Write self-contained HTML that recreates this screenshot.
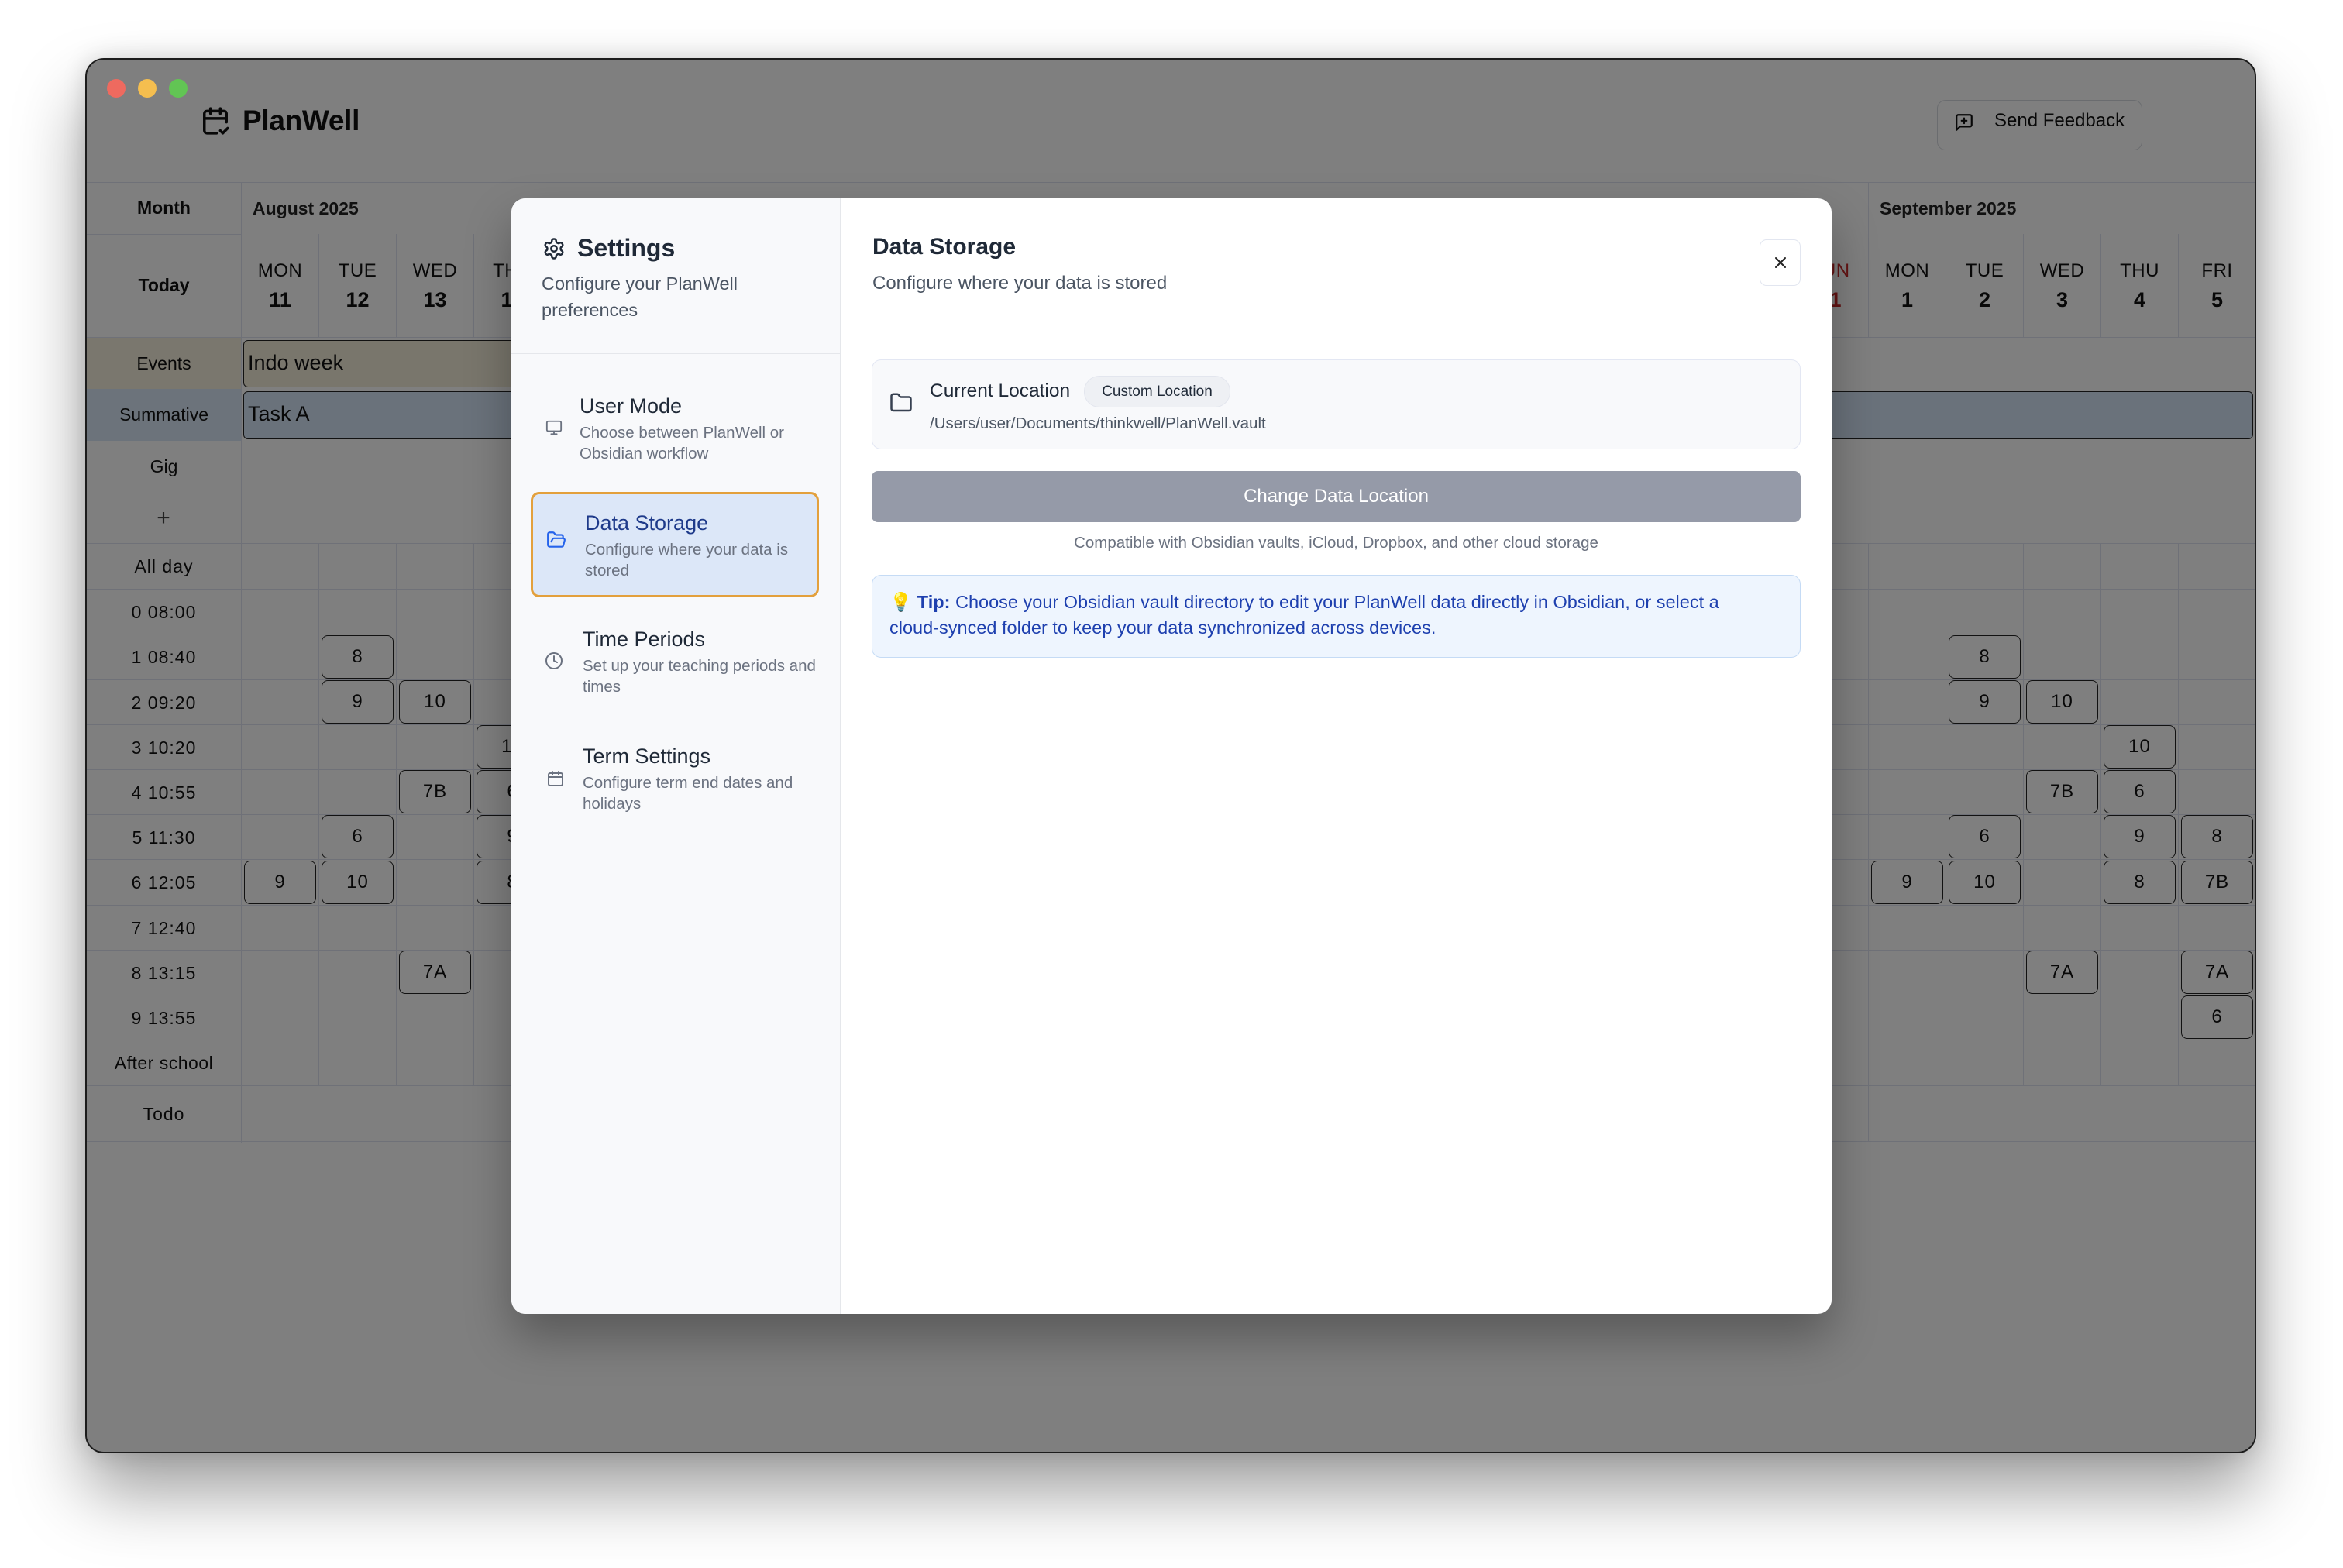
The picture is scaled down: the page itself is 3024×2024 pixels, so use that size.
<!DOCTYPE html>
<html><head><meta charset="utf-8">
<style>
*{margin:0;padding:0;box-sizing:border-box}
html,body{width:3024px;height:2024px;background:#fff;overflow:hidden;font-family:"Liberation Sans",Arial,sans-serif}
#win{position:absolute;left:110px;top:75px;width:2802px;height:1801px;border-radius:24px;overflow:hidden;border:2px solid #1c1c1c;box-shadow:0 50px 90px rgba(0,0,0,.38),0 0 30px rgba(0,0,0,.15);background:#fff}
#in{position:absolute;left:-112px;top:-77px;width:3024px;height:2024px}
.a{position:absolute}
.c{position:absolute;display:flex;align-items:center;justify-content:center}
.lbl{position:absolute;left:112px;width:199px;display:flex;align-items:center;justify-content:center;font-size:23px;letter-spacing:1px;color:#111}
.row{position:absolute;left:112px;width:2800px;border-bottom:1px solid #dfe2f0}
.box{position:absolute;width:93px;height:56px;border:1.6px solid #222;border-radius:8px;display:flex;align-items:center;justify-content:center;font-size:24px;letter-spacing:1px;color:#111}
.dh{position:absolute;top:302px;width:100px;height:133px;text-align:center;color:#111;border-left:1px solid #dfe2f0}
.dh .d{position:absolute;top:34px;width:100%;font-size:24px;letter-spacing:.5px}
.dh .n{position:absolute;top:70px;width:100%;font-size:27px;font-weight:bold}
#ov{position:absolute;left:0;top:0;width:3024px;height:2024px;background:rgba(0,0,0,.5)}
.tl{position:absolute;top:102px;width:24px;height:24px;border-radius:50%}
#modal{position:absolute;left:660px;top:256px;width:1704px;height:1440px;border-radius:18px;background:#fff;overflow:hidden;box-shadow:0 30px 60px rgba(0,0,0,.3)}
#side{position:absolute;left:0;top:0;width:425px;height:1440px;background:#f8f9fb;border-right:1px solid #e5e7eb}
.it{position:absolute;color:#1f2937}
.it .t{font-size:27px;font-weight:500;color:#1f2937}
.it .s{font-size:20.5px;line-height:27px;color:#6b7280;width:310px;margin-top:5px}
</style></head><body>
<div id="win"><div id="in">
  <svg class="a" style="left:259px;top:136px" width="38" height="40" viewBox="0 0 24 24" fill="none" stroke="#111" stroke-width="2.2" stroke-linecap="round" stroke-linejoin="round"><path d="M21 13V6a2 2 0 0 0-2-2H5a2 2 0 0 0-2 2v14a2 2 0 0 0 2 2h8"/><path d="M16 2v4M8 2v4M3 10h18"/><path d="M16 20l2 2 4-4"/></svg>
  <div class="a" style="left:313px;top:135px;font-size:37px;font-weight:bold;color:#111;letter-spacing:-.3px">PlanWell</div>
  <div class="a" style="left:2500px;top:129px;width:265px;height:65px;border:1.5px solid #d5d8de;border-radius:11px"></div>
  <svg class="a" style="left:2522px;top:145px" width="26" height="26" viewBox="0 0 24 24" fill="none" stroke="#111" stroke-width="2" stroke-linecap="round" stroke-linejoin="round"><path d="M21 15a2 2 0 0 1-2 2H7l-4 4V5a2 2 0 0 1 2-2h14a2 2 0 0 1 2 2z"/><path d="M12 7v6M9 10h6"/></svg>
  <div class="a" style="left:2574px;top:142px;font-size:24px;font-weight:500;color:#111">Send Feedback</div>

  <div class="a" style="left:112px;top:235px;width:2800px;height:1px;background:#dfe2f0"></div>
  <div class="a" style="left:112px;top:302px;width:199px;height:1px;background:#dfe2f0"></div>
  <div class="a" style="left:311px;top:235px;width:1px;height:1240px;background:#dfe2f0"></div>
  <div class="a" style="left:2411px;top:235px;width:1px;height:67px;background:#dfe2f0"></div>
  <div class="lbl" style="top:235px;height:67px;font-weight:bold;letter-spacing:0">Month</div>
  <div class="lbl" style="top:302px;height:133px;font-weight:bold;letter-spacing:0">Today</div>
  <div class="a" style="left:326px;top:256px;font-size:23px;font-weight:600;color:#222">August 2025</div>
  <div class="a" style="left:2426px;top:256px;font-size:23px;font-weight:600;color:#222">September 2025</div>

  <div class="dh" style="left:311px"><div class="d">MON</div><div class="n">11</div></div>
  <div class="dh" style="left:411px"><div class="d">TUE</div><div class="n">12</div></div>
  <div class="dh" style="left:511px"><div class="d">WED</div><div class="n">13</div></div>
  <div class="dh" style="left:611px"><div class="d">THU</div><div class="n">14</div></div>
  <div class="dh" style="left:2311px;color:#c62828"><div class="d">SUN</div><div class="n">31</div></div>
  <div class="dh" style="left:2411px"><div class="d">MON</div><div class="n">1</div></div>
  <div class="dh" style="left:2511px"><div class="d">TUE</div><div class="n">2</div></div>
  <div class="dh" style="left:2611px"><div class="d">WED</div><div class="n">3</div></div>
  <div class="dh" style="left:2711px"><div class="d">THU</div><div class="n">4</div></div>
  <div class="dh" style="left:2811px"><div class="d">FRI</div><div class="n">5</div></div>
  <div class="a" style="left:112px;top:435px;width:2800px;height:1px;background:#dfe2f0"></div>

  <div class="lbl" style="top:436px;height:66px;background:#f4eedc;letter-spacing:0">Events</div>
  <div class="a" style="left:314px;top:439px;width:1100px;height:61px;background:#f3ecd8;border:1.5px solid #222;border-radius:6px;font-size:27px;padding:13px 0 0 5px;color:#111">Indo week</div>
  <div class="a" style="left:112px;top:502px;width:199px;height:67px;background:#d8e6f6"></div>
  <div class="lbl" style="top:502px;height:67px;letter-spacing:0">Summative</div>
  <div class="a" style="left:314px;top:505px;width:2594px;height:62px;background:#d5e5f6;border:1.5px solid #222;border-radius:6px;font-size:27px;padding:13px 0 0 5px;color:#111">Task A</div>
  <div class="a" style="left:112px;top:636px;width:199px;height:1px;background:#dfe2f0"></div>
  <div class="lbl" style="top:569px;height:67px;letter-spacing:0">Gig</div>
  <div class="lbl" style="top:636px;height:66px;font-size:30px;color:#444">+</div>

  <div class="a" style="left:311px;top:702px;width:2601px;height:700px;background-image:linear-gradient(to right,#dfe2f0 1px,transparent 1px);background-size:100px 100%"></div>
  <div class="row" style="top:701px;height:1px"></div>
  <div class="row" style="top:702px;height:59px"></div>
  <div class="row" style="top:761px;height:58px"></div>
  <div class="row" style="top:819px;height:59px"></div>
  <div class="row" style="top:878px;height:58px"></div>
  <div class="row" style="top:936px;height:58px"></div>
  <div class="row" style="top:994px;height:58px"></div>
  <div class="row" style="top:1052px;height:58px"></div>
  <div class="row" style="top:1110px;height:59px"></div>
  <div class="row" style="top:1169px;height:58px"></div>
  <div class="row" style="top:1227px;height:58px"></div>
  <div class="row" style="top:1285px;height:58px"></div>
  <div class="row" style="top:1343px;height:59px"></div>
  <div class="row" style="top:1402px;height:72px"></div>
  <div class="a" style="left:1011px;top:1402px;width:1px;height:72px;background:#dfe2f0"></div>
  <div class="a" style="left:1711px;top:1402px;width:1px;height:72px;background:#dfe2f0"></div>
  <div class="a" style="left:2411px;top:1402px;width:1px;height:72px;background:#dfe2f0"></div>
  <div class="lbl" style="top:702px;height:59px">All day</div>
  <div class="lbl" style="top:761px;height:58px">0 08:00</div>
  <div class="lbl" style="top:819px;height:59px">1 08:40</div>
  <div class="lbl" style="top:878px;height:58px">2 09:20</div>
  <div class="lbl" style="top:936px;height:58px">3 10:20</div>
  <div class="lbl" style="top:994px;height:58px">4 10:55</div>
  <div class="lbl" style="top:1052px;height:58px">5 11:30</div>
  <div class="lbl" style="top:1110px;height:59px">6 12:05</div>
  <div class="lbl" style="top:1169px;height:58px">7 12:40</div>
  <div class="lbl" style="top:1227px;height:58px">8 13:15</div>
  <div class="lbl" style="top:1285px;height:58px">9 13:55</div>
  <div class="lbl" style="top:1343px;height:59px;letter-spacing:.5px">After school</div>
  <div class="lbl" style="top:1402px;height:72px">Todo</div>

  <div class="box" style="left:415px;top:820px">8</div>
  <div class="box" style="left:415px;top:878px">9</div>
  <div class="box" style="left:415px;top:1052px">6</div>
  <div class="box" style="left:415px;top:1111px">10</div>
  <div class="box" style="left:315px;top:1111px">9</div>
  <div class="box" style="left:515px;top:878px">10</div>
  <div class="box" style="left:515px;top:994px">7B</div>
  <div class="box" style="left:515px;top:1227px">7A</div>
  <div class="box" style="left:615px;top:936px">10</div>
  <div class="box" style="left:615px;top:994px">6</div>
  <div class="box" style="left:615px;top:1052px">9</div>
  <div class="box" style="left:615px;top:1111px">8</div>
  <div class="box" style="left:2415px;top:1111px">9</div>
  <div class="box" style="left:2515px;top:820px">8</div>
  <div class="box" style="left:2515px;top:878px">9</div>
  <div class="box" style="left:2515px;top:1052px">6</div>
  <div class="box" style="left:2515px;top:1111px">10</div>
  <div class="box" style="left:2615px;top:878px">10</div>
  <div class="box" style="left:2615px;top:994px">7B</div>
  <div class="box" style="left:2615px;top:1227px">7A</div>
  <div class="box" style="left:2715px;top:936px">10</div>
  <div class="box" style="left:2715px;top:994px">6</div>
  <div class="box" style="left:2715px;top:1052px">9</div>
  <div class="box" style="left:2715px;top:1111px">8</div>
  <div class="box" style="left:2815px;top:1052px">8</div>
  <div class="box" style="left:2815px;top:1111px">7B</div>
  <div class="box" style="left:2815px;top:1227px">7A</div>
  <div class="box" style="left:2815px;top:1285px">6</div>

  <div id="ov"></div>
  <div class="tl" style="left:138px;background:#ee6a5f"></div>
  <div class="tl" style="left:178px;background:#f5be4f"></div>
  <div class="tl" style="left:218px;background:#62c554"></div>

  <div id="modal">
    <div id="side">
      <svg class="a" style="left:40px;top:50px" width="30" height="30" viewBox="0 0 24 24" fill="none" stroke="#1f2937" stroke-width="2" stroke-linecap="round" stroke-linejoin="round"><path d="M12.22 2h-.44a2 2 0 0 0-2 2v.18a2 2 0 0 1-1 1.73l-.43.25a2 2 0 0 1-2 0l-.15-.08a2 2 0 0 0-2.730.73l-.22.38a2 2 0 0 0 .73 2.73l.15.1a2 2 0 0 1 1 1.72v.51a2 2 0 0 1-1 1.74l-.15.09a2 2 0 0 0-.73 2.73l.22.38a2 2 0 0 0 2.73.73l.15-.08a2 2 0 0 1 2 0l.43.25a2 2 0 0 1 1 1.73V20a2 2 0 0 0 2 2h.44a2 2 0 0 0 2-2v-.18a2 2 0 0 1 1-1.73l.43-.25a2 2 0 0 1 2 0l.15.08a2 2 0 0 0 2.73-.73l.22-.39a2 2 0 0 0-.73-2.73l-.15-.08a2 2 0 0 1-1-1.74v-.5a2 2 0 0 1 1-1.74l.15-.09a2 2 0 0 0 .73-2.73l-.22-.38a2 2 0 0 0-2.73-.73l-.15.08a2 2 0 0 1-2 0l-.43-.25a2 2 0 0 1-1-1.73V4a2 2 0 0 0-2-2z"/><circle cx="12" cy="12" r="3"/></svg>
      <div class="a" style="left:85px;top:46px;font-size:32px;font-weight:600;color:#1f2937">Settings</div>
      <div class="a" style="left:39px;top:93px;width:340px;font-size:23.5px;line-height:34px;color:#4b5563">Configure your PlanWell preferences</div>
      <div class="a" style="left:0;top:200px;width:425px;height:1px;background:#e5e7eb"></div>

      <svg class="a" style="left:44px;top:285px" width="22" height="22" viewBox="0 0 24 24" fill="none" stroke="#6b7280" stroke-width="2" stroke-linecap="round" stroke-linejoin="round"><rect x="2" y="3" width="20" height="14" rx="2"/><path d="M8 21h8M12 17v4"/></svg>
      <div class="it" style="left:88px;top:253px"><div class="t">User Mode</div><div class="s">Choose between PlanWell or Obsidian workflow</div></div>

      <div class="a" style="left:25px;top:379px;width:372px;height:136px;background:#dce7f8;border:3px solid #e3a03c;border-radius:11px"></div>
      <svg class="a" style="left:45px;top:428px" width="26" height="26" viewBox="0 0 24 24" fill="none" stroke="#2563eb" stroke-width="2" stroke-linecap="round" stroke-linejoin="round"><path d="m6 14 1.5-2.9A2 2 0 0 1 9.24 10H20a2 2 0 0 1 1.94 2.5l-1.54 6a2 2 0 0 1-1.95 1.5H4a2 2 0 0 1-2-2V5a2 2 0 0 1 2-2h3.9a2 2 0 0 1 1.69.9l.81 1.2a2 2 0 0 0 1.67.9H18a2 2 0 0 1 2 2v2"/></svg>
      <div class="it" style="left:95px;top:404px"><div class="t" style="color:#1e3a8a">Data Storage</div><div class="s" style="width:290px">Configure where your data is stored</div></div>

      <svg class="a" style="left:43px;top:585px" width="24" height="24" viewBox="0 0 24 24" fill="none" stroke="#6b7280" stroke-width="2" stroke-linecap="round" stroke-linejoin="round"><circle cx="12" cy="12" r="10"/><path d="M12 6v6l4 2"/></svg>
      <div class="it" style="left:92px;top:554px"><div class="t">Time Periods</div><div class="s">Set up your teaching periods and times</div></div>

      <svg class="a" style="left:45px;top:737px" width="24" height="24" viewBox="0 0 24 24" fill="none" stroke="#6b7280" stroke-width="2" stroke-linecap="round" stroke-linejoin="round"><rect x="3" y="5" width="18" height="16" rx="2"/><path d="M16 3v4M8 3v4M3 10h18"/></svg>
      <div class="it" style="left:92px;top:705px"><div class="t">Term Settings</div><div class="s">Configure term end dates and holidays</div></div>
    </div>

    <div class="a" style="left:466px;top:46px;font-size:30px;font-weight:600;color:#1f2937">Data Storage</div>
    <div class="a" style="left:466px;top:96px;font-size:24px;color:#4b5563">Configure where your data is stored</div>
    <div class="c" style="left:1611px;top:53px;width:53px;height:60px;border:1.5px solid #e2e6f0;border-radius:9px">
      <svg width="20" height="20" viewBox="0 0 20 20" stroke="#222" stroke-width="2" stroke-linecap="round"><path d="M4 4l12 12M16 4L4 16"/></svg>
    </div>
    <div class="a" style="left:425px;top:167px;width:1279px;height:1px;background:#e5e7eb"></div>

    <div class="a" style="left:465px;top:208px;width:1199px;height:116px;background:#f8f9fb;border:1.5px solid #e3e7f3;border-radius:12px"></div>
    <svg class="a" style="left:487px;top:249px" width="32" height="30" viewBox="0 0 24 24" fill="none" stroke="#374151" stroke-width="2" stroke-linecap="round" stroke-linejoin="round"><path d="M20 20a2 2 0 0 0 2-2V8a2 2 0 0 0-2-2h-7.9a2 2 0 0 1-1.69-.9L9.6 3.9A2 2 0 0 0 7.93 3H4a2 2 0 0 0-2 2v13a2 2 0 0 0 2 2Z"/></svg>
    <div class="a" style="left:540px;top:235px;font-size:24.5px;font-weight:500;color:#1f2937">Current Location</div>
    <div class="c" style="left:739px;top:229px;width:189px;height:41px;background:#eef0f4;border:1px solid #e3e6ee;border-radius:20px;font-size:19px;font-weight:500;color:#1f2937">Custom Location</div>
    <div class="a" style="left:540px;top:279px;font-size:20.5px;color:#4b5563">/Users/user/Documents/thinkwell/PlanWell.vault</div>

    <div class="c" style="left:465px;top:352px;width:1199px;height:66px;background:#959aa8;border-radius:8px;font-size:24px;font-weight:500;color:#fff">Change Data Location</div>
    <div class="c" style="left:465px;top:431px;width:1199px;height:28px;font-size:20.5px;color:#6b7280">Compatible with Obsidian vaults, iCloud, Dropbox, and other cloud storage</div>

    <div class="a" style="left:465px;top:486px;width:1199px;height:107px;background:#eef5fe;border:1.5px solid #c5dbf5;border-radius:12px;padding:18px 60px 0 22px;font-size:23.5px;line-height:33px;color:#1e40af">💡 <b>Tip:</b> Choose your Obsidian vault directory to edit your PlanWell data directly in Obsidian, or select a cloud-synced folder to keep your data synchronized across devices.</div>
  </div>
</div></div>
</body></html>
